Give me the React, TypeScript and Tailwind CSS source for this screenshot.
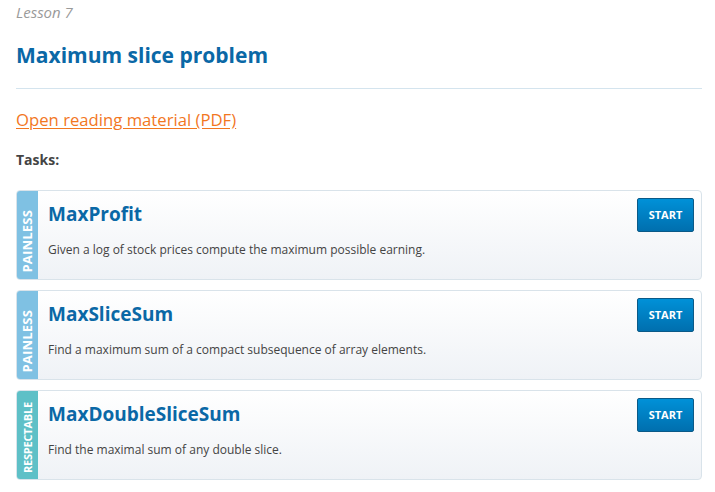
import React from "react";

type Task = { name: string; desc: string; level: "PAINLESS" | "RESPECTABLE" };

const tasks: Task[] = [
  { name: "MaxProfit", desc: "Given a log of stock prices compute the maximum possible earning.", level: "PAINLESS" },
  { name: "MaxSliceSum", desc: "Find a maximum sum of a compact subsequence of array elements.", level: "PAINLESS" },
  { name: "MaxDoubleSliceSum", desc: "Find the maximal sum of any double slice.", level: "RESPECTABLE" },
];

function Card({ t }: { t: Task }) {
  const painless = t.level === "PAINLESS";
  return (
    <div className="flex h-[90px] rounded-[4px] border border-[#d9e3ea] bg-gradient-to-b from-white to-[#eff2f6] overflow-hidden">
      <div
        className={`w-[21px] shrink-0 flex flex-col items-center justify-end pb-[6px] ${painless ? "bg-[#7fc1e3]" : "bg-[#5ec0c7]"}`}
      >
        <span
          className={`block rotate-180 [writing-mode:vertical-rl] whitespace-nowrap font-bold text-white leading-[21px] ${
            painless ? "text-[13px] tracking-[0.2px]" : "text-[11px] tracking-[-0.2px]"
          }`}
        >
          {t.level}
        </span>
      </div>
      <div className="flex-1 pl-[10px] pt-[11px]">
        <div className="text-[19px] leading-[24px] font-bold text-[#0a68a6]">{t.name}</div>
        <div className="mt-[16px] text-[12px] leading-[16px] text-[#444]">{t.desc}</div>
      </div>
      <div className="pt-[7px] pr-[7px]">
        <button className="w-[57px] h-[34px] rounded-[2px] border border-[#0a5a88] bg-gradient-to-b from-[#0091d8] to-[#006fae] text-[11px] font-bold text-white">
          START
        </button>
      </div>
    </div>
  );
}

export default function App() {
  return (
    <div className="w-[715px] h-[492px] bg-white pl-4 pr-[13px] pt-[2px]" style={{ fontFamily: '"Open Sans", sans-serif' }}>
      <div className="text-[15px] leading-[20px] italic text-[#9a9a9a]">Lesson 7</div>
      <h1 className="mt-[22px] text-[21px] leading-[22px] font-bold text-[#0a68a6]">Maximum slice problem</h1>
      <div className="mt-[22px] h-px bg-[#d4e4ee]" />
      <a href="#" className="mt-[19px] block text-[16.7px] leading-[24px] text-[#f2771f] underline underline-offset-2">
        Open reading material (PDF)
      </a>
      <div className="mt-[18px] text-[14px] leading-[20px] font-bold text-[#444]">Tasks:</div>
      <div className="mt-[20px] flex flex-col gap-[10px]">
        {tasks.map((t) => (
          <Card key={t.name} t={t} />
        ))}
      </div>
    </div>
  );
}
